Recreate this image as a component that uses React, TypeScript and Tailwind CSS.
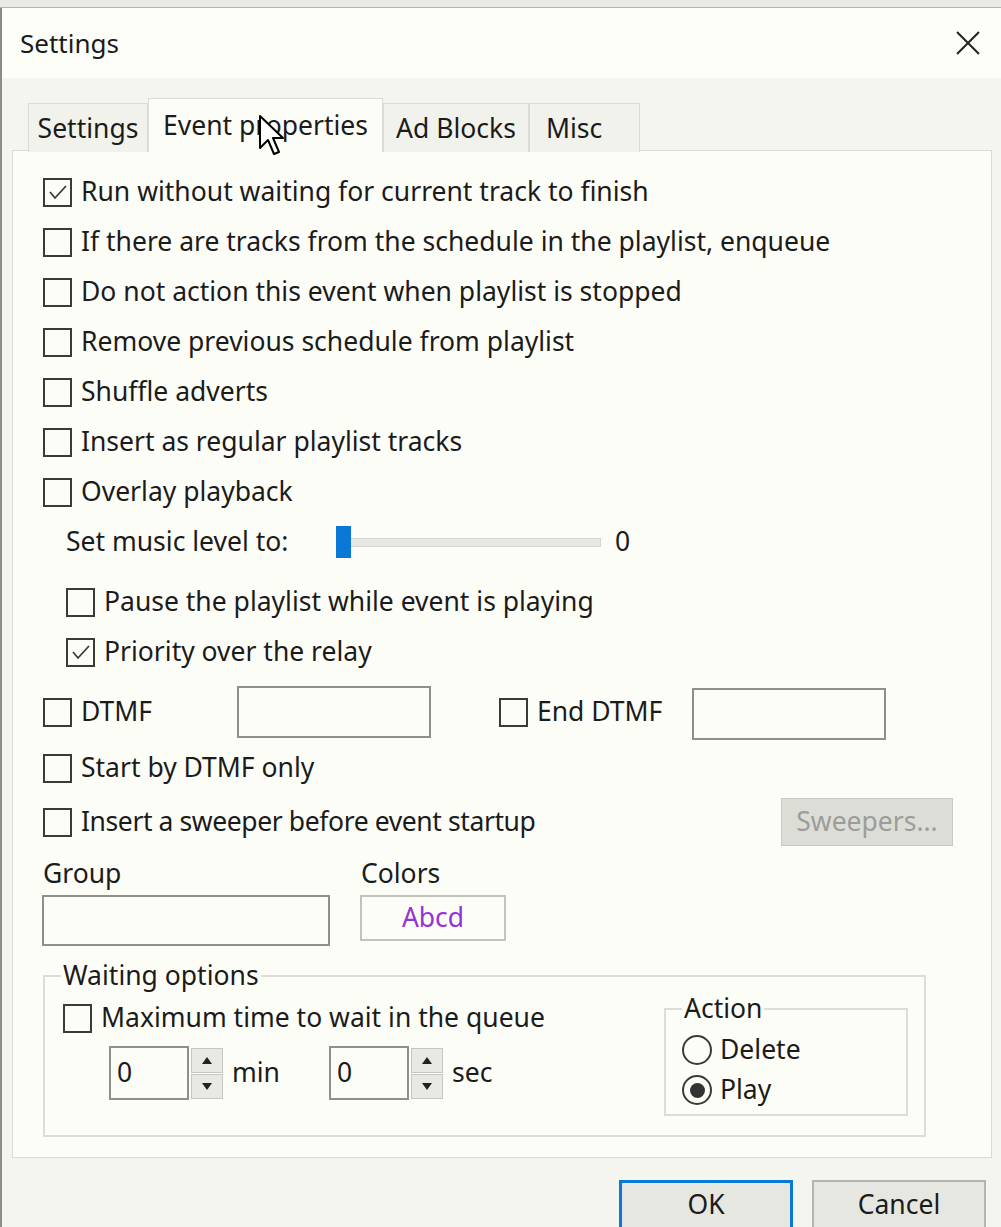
import type { ReactNode } from 'react';

const font = { fontFamily: '"Noto Sans", "Open Sans", sans-serif' };

function Box({ checked }: { checked?: boolean }) {
  return (
    <span className="flex h-[29px] w-[29px] shrink-0 items-center justify-center border-2 border-[#3a3a3a] bg-[#fdfdf7]">
      {checked && (
        <svg width="22" height="22" viewBox="0 0 22 22">
          <polyline points="3,11 8,17 19,5" fill="none" stroke="#3a3a3a" strokeWidth="1.8" />
        </svg>
      )}
    </span>
  );
}

function Check({ label, checked, className = '' }: { label: string; checked?: boolean; className?: string }) {
  return (
    <div className={`flex h-[50px] items-center gap-[9px] ${className}`}>
      <Box checked={checked} />
      <span>{label}</span>
    </div>
  );
}

function Radio({ label, checked }: { label: string; checked?: boolean }) {
  return (
    <div className="flex h-[40px] items-center gap-[8px]">
      <span className="flex h-[30px] w-[30px] items-center justify-center rounded-full border-2 border-[#3a3a3a]">
        {checked && <span className="h-[15px] w-[15px] rounded-full bg-[#333]" />}
      </span>
      <span>{label}</span>
    </div>
  );
}

function Spin({ unit, className = '' }: { unit: string; className?: string }) {
  return (
    <div className={`flex items-center ${className}`}>
      <div className="flex h-[54px] w-[80px] items-center border-2 border-[#8f908a] bg-[#fdfdf7] pl-[6px]">0</div>
      <div className="ml-[2px] flex flex-col gap-[1px]">
        {['up', 'down'].map((d) => (
          <span key={d} className="flex h-[25px] w-[32px] items-center justify-center border border-[#c6c7c1] bg-[#e8e9e3]">
            <svg width="10" height="7" viewBox="0 0 10 7">
              <polygon points={d === 'up' ? '0,7 10,7 5,0' : '0,0 10,0 5,7'} fill="#222" />
            </svg>
          </span>
        ))}
      </div>
      <span className="ml-[9px]">{unit}</span>
    </div>
  );
}

function Tab({ children, active, w, pad = 'justify-center' }: { children: ReactNode; active?: boolean; w: string; pad?: string }) {
  return (
    <div
      className={
        active
          ? `flex h-[54px] ${w} ${pad} items-start border border-b-0 border-[#dadbd5] bg-[#fdfdf7] pt-[7px]`
          : `flex h-[49px] ${w} ${pad} items-start border border-b-0 border-[#dadbd5] bg-[#f1f2ec] pt-[5px]`
      }
    >
      {children}
    </div>
  );
}

export default function App() {
  return (
    <div className="relative h-[1227px] w-[1001px] overflow-hidden bg-[#f4f5ef] text-[26.5px] text-[#1b1b1b]" style={font}>
      <div className="h-[8px] border-b border-[#b5b6b0] bg-[#e9eae4]" />
      <div className="border-l-2 border-[#8b8c86]">
        <div className="flex h-[70px] items-center justify-between bg-[#fefef8] pl-[18px] pr-[20px]">
          <span className="text-[26px]">Settings</span>
          <svg width="26" height="26" viewBox="0 0 26 26">
            <path d="M2 2 L24 24 M24 2 L2 24" stroke="#222" strokeWidth="2" />
          </svg>
        </div>

        <div className="px-[10px] pt-[20px]">
          <div className="relative z-10 -mb-[2px] flex items-end pl-[16px]">
            <Tab w="w-[120px]">Settings</Tab>
            <Tab w="w-[235px]" active>
              Event properties
            </Tab>
            <Tab w="w-[146px]">Ad Blocks</Tab>
            <Tab w="w-[111px]" pad="pl-[16px]">
              Misc
            </Tab>
          </div>

          <div className="h-[1008px] w-[980px] border border-[#dadbd5] bg-[#fdfdf7] pl-[30px] pt-[16px]">
            <Check label="Run without waiting for current track to finish" checked />
            <Check label="If there are tracks from the schedule in the playlist, enqueue" />
            <Check label="Do not action this event when playlist is stopped" />
            <Check label="Remove previous schedule from playlist" />
            <Check label="Shuffle adverts" />
            <Check label="Insert as regular playlist tracks" />
            <Check label="Overlay playback" />

            <div className="flex h-[50px] items-center pl-[23px]">
              <span className="w-[270px]">Set music level to:</span>
              <div className="relative flex h-[32px] w-[268px] items-center">
                <div className="ml-[5px] h-[9px] w-[260px] border border-[#d4d6d0] bg-[#e6e9e3]" />
                <div className="absolute left-0 top-0 h-[32px] w-[15px] bg-[#0a78d6]" />
              </div>
              <span className="ml-[11px]">0</span>
            </div>

            <Check label="Pause the playlist while event is playing" className="mt-[10px] pl-[23px]" />
            <Check label="Priority over the relay" checked className="pl-[23px]" />

            <div className="mt-[9px] flex h-[54px] items-start">
              <div className="flex h-[52px] w-[194px] items-center gap-[9px]">
                <Box />
                <span>DTMF</span>
              </div>
              <div className="h-[52px] w-[194px] border-2 border-[#8f908a]" />
              <div className="ml-[68px] flex h-[52px] w-[193px] items-center gap-[9px]">
                <Box />
                <span>End DTMF</span>
              </div>
              <div className="mt-[2px] h-[52px] w-[194px] border-2 border-[#8f908a]" />
            </div>

            <Check label="Start by DTMF only" className="mt-[3px]" />

            <div className="mt-[4px] flex h-[50px] items-center justify-between pr-[38px]">
              <div className="flex items-center gap-[9px]">
                <Box />
                <span className="tracking-[-0.4px]">Insert a sweeper before event startup</span>
              </div>
              <div className="flex h-[48px] w-[172px] items-center justify-center border border-[#c9cac4] bg-[#dcddd7] text-[#9c9d98]">
                Sweepers...
              </div>
            </div>

            <div className="mt-[13px] flex h-[28px] items-center">
              <span className="w-[318px]">Group</span>
              <span>Colors</span>
            </div>
            <div className="mt-[7px] flex items-start">
              <div className="-ml-px h-[51px] w-[288px] border-2 border-[#8f908a]" />
              <div className="ml-[30px] flex h-[46px] w-[146px] items-center justify-center border-2 border-[#c2c3bd] text-[#9234d8]">
                Abcd
              </div>
            </div>

            <div className="relative mt-[29px] flex h-[162px] w-[883px] border-2 border-[#dcddd7] pl-[18px]">
              <span className="absolute -top-[21px] left-[16px] bg-[#fdfdf7] px-[2px]">Waiting options</span>
              <div className="pt-[16px]">
                <Check label="Maximum time to wait in the queue" />
                <div className="ml-[46px] mt-[3px] flex items-center">
                  <Spin unit="min" className="w-[220px]" />
                  <Spin unit="sec" />
                </div>
              </div>
              <div className="relative ml-auto mr-[16px] mt-[31px] h-[108px] w-[244px] border-2 border-[#dcddd7] pl-[16px] pt-[20px]">
                <span className="absolute -top-[21px] left-[16px] bg-[#fdfdf7] px-[2px]">Action</span>
                <Radio label="Delete" />
                <Radio label="Play" checked />
              </div>
            </div>
          </div>

          <div className="flex justify-end gap-[19px] pr-[5px] pt-[22px]">
            <div className="flex h-[50px] w-[174px] items-center justify-center border-[3px] border-[#0a78d6] bg-[#e6e7e1]">OK</div>
            <div className="flex h-[50px] w-[174px] items-center justify-center border-2 border-[#b4b5af] bg-[#e6e7e1]">Cancel</div>
          </div>
        </div>
      </div>

      <svg className="absolute left-[258px] top-[114px] z-20" width="28" height="44" viewBox="0 0 14 22">
        <path d="M1 1 L1 17 L5 13 L8 20 L10.5 19 L7.5 12 L12.5 12 Z" fill="#fff" stroke="#000" strokeWidth="1" strokeLinejoin="round" />
      </svg>
    </div>
  );
}
